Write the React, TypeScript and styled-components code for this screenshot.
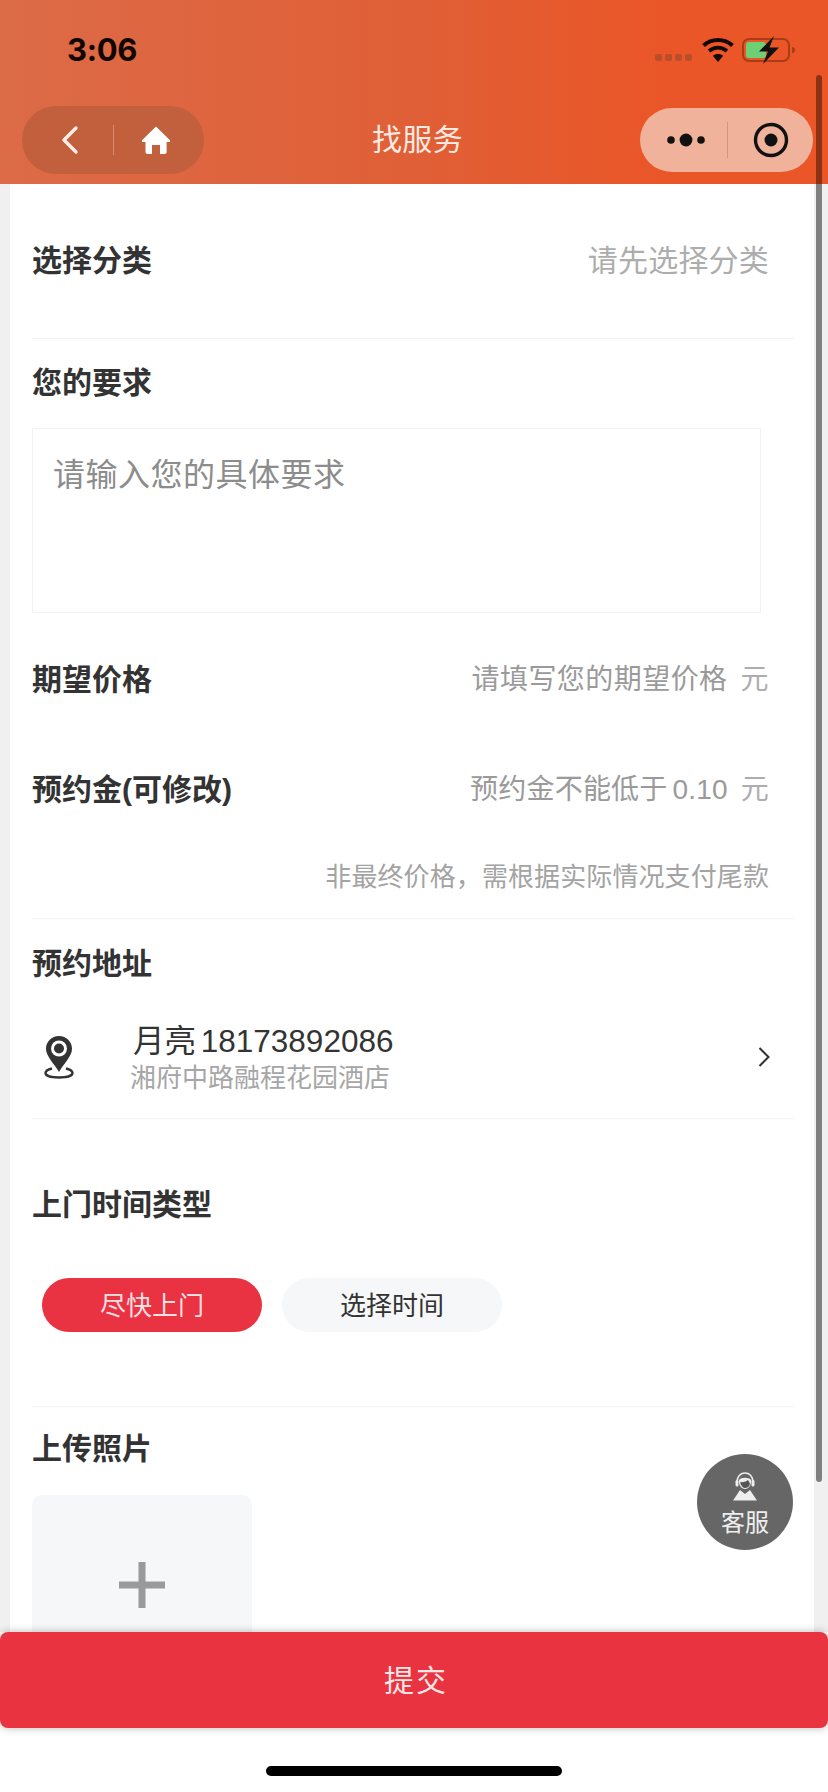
import React from "react";
import styled, { createGlobalStyle } from "styled-components";

const Global = createGlobalStyle`
  html, body { margin: 0; padding: 0; background: #fff; }
  body { font-family: "Liberation Sans", "Noto Sans CJK SC", sans-serif; }
  * { box-sizing: border-box; }
`;

const Frame = styled.div`
  position: relative;
  width: 828px;
  height: 1792px;
  display: flex;
  flex-direction: column;
  overflow: hidden;
  background: #fff;
`;
const Header = styled.header`
  height: 184px;
  flex: none;
  display: flex;
  flex-direction: column;
  background: linear-gradient(90deg, #dc6b47 0%, #e05f36 50%, #ea5628 80%, #eb5628 100%);
`;
const StatusBar = styled.div`
  height: 106px;
  display: flex;
  align-items: flex-start;
  justify-content: space-between;
  padding: 30px 32px 0 67px;
`;
const Time = styled.span`
  font-size: 31px;
  line-height: 40px;
  font-weight: 700;
  color: #120603;
  font-family: "Inter", "Liberation Sans", sans-serif;
  letter-spacing: -0.3px;
`;
const StatusIcons = styled.div`
  display: flex;
  align-items: center;
  gap: 8px;
  padding-top: 6px;
`;
const Signal = styled.div`
  display: flex;
  gap: 3px;
  margin-top: 14px;
  margin-right: 2px;
`;
const SignalDot = styled.i`
  width: 7px;
  height: 7px;
  border-radius: 2px;
  background: #bb4e2a;
`;
const NavBar = styled.div`
  height: 78px;
  display: grid;
  grid-template-columns: 1fr auto 1fr;
  align-items: flex-start;
  padding: 0 15px 0 22px;
`;
const Capsule = styled.div<{ $w: number; $h: number; $bg: string }>`
  width: ${(p) => p.$w}px;
  height: ${(p) => p.$h}px;
  border-radius: ${(p) => p.$h / 2}px;
  background: ${(p) => p.$bg};
  display: flex;
  align-items: center;
`;
const LeftCapsule = styled(Capsule)`
  justify-self: start;
`;
const RightCapsule = styled(Capsule)`
  justify-self: end;
  margin-top: 2px;
`;
const CapsuleCell = styled.div<{ $w: number; $pl?: number }>`
  width: ${(p) => p.$w}px;
  padding-left: ${(p) => p.$pl ?? 0}px;
  display: flex;
  align-items: center;
  justify-content: center;
`;
const CapsuleRule = styled.i<{ $h: number; $c: string }>`
  width: 1px;
  height: ${(p) => p.$h}px;
  background: ${(p) => p.$c};
  flex: none;
`;
const Title = styled.h1`
  margin: 0;
  font-size: 30px;
  line-height: 68px;
  font-weight: 400;
  color: #fbe9e2;
  letter-spacing: 0.4px;
`;

const Main = styled.main`
  flex: none;
  height: 1448px;
  overflow: hidden;
  background: #f0f0f0;
  padding: 0 14px 0 10px;
`;
const Sheet = styled.div`
  background: #fff;
  min-height: 100%;
  padding: 0 20px 0 22px;
`;
const Section = styled.section<{ $rule?: boolean; $pb?: number }>`
  padding-bottom: ${(p) => p.$pb ?? 0}px;
  border-bottom: ${(p) => (p.$rule ? "1px solid #f3f3f3" : "none")};
`;
const Row = styled.div<{ $h: number }>`
  height: ${(p) => p.$h}px;
  display: flex;
  align-items: center;
  justify-content: space-between;
  padding-right: 25px;
`;
const Label = styled.h2<{ $pt?: number }>`
  margin: 0;
  padding-top: ${(p) => p.$pt ?? 0}px;
  font-size: 30px;
  line-height: 44px;
  font-weight: 700;
  color: #333;
  white-space: nowrap;
`;
const Value = styled.span<{ $size?: number; $c?: string; $ls?: number }>`
  font-size: ${(p) => p.$size ?? 28}px;
  line-height: 44px;
  color: ${(p) => p.$c ?? "#9a9a9a"};
  white-space: nowrap;
  letter-spacing: ${(p) => p.$ls ?? 0.2}px;
  word-spacing: -3px;
`;
const Unit = styled.span`
  font-size: 28px;
  color: #adadad;
  margin-left: 13px;
`;
const TextBox = styled.div`
  width: 729px;
  height: 185px;
  margin-top: 23px;
  border: 1px solid #f1f1f1;
  padding: 24px 20px;
  font-size: 32px;
  line-height: 44px;
  letter-spacing: 0.5px;
  color: #8c8c8c;
`;
const Hint = styled.div`
  margin-top: 26px;
  padding-right: 25px;
  text-align: right;
  font-size: 26px;
  line-height: 36px;
  letter-spacing: 0.1px;
  color: #a3a3a3;
`;
const AddressRow = styled.div`
  height: 132px;
  display: grid;
  grid-template-columns: 98px 1fr auto;
  align-items: center;
  padding-right: 23px;
`;
const PinCell = styled.div`
  display: flex;
  padding-left: 12px;
  padding-top: 10px;
`;
const AddressText = styled.div`
  display: flex;
  flex-direction: column;
  padding-top: 14px;
`;
const Name = styled.div`
  font-size: 31.5px;
  line-height: 38px;
  color: #333;
  padding-left: 3px;
  word-spacing: -4px;
`;
const Street = styled.div`
  font-size: 26px;
  line-height: 36px;
  color: #a6a6a6;
`;
const ChevronCell = styled.div`
  display: flex;
  margin-top: 10px;
`;
const Pills = styled.div`
  display: flex;
  gap: 20px;
  padding: 51px 0 74px 10px;
`;
const Pill = styled.div<{ $on?: boolean }>`
  width: 220px;
  height: 54px;
  border-radius: 27px;
  display: flex;
  align-items: center;
  justify-content: center;
  padding-bottom: 4px;
  font-size: 26px;
  color: ${(p) => (p.$on ? "#fbdfe1" : "#333")};
  background: ${(p) => (p.$on ? "#e93343" : "#f6f7f9")};
`;
const Upload = styled.div`
  width: 220px;
  height: 220px;
  margin-top: 24px;
  border-radius: 10px;
  background: #f6f7f9;
  display: flex;
  justify-content: center;
  padding-top: 67px;
`;
const Submit = styled.button`
  flex: none;
  width: 828px;
  height: 96px;
  border: 0;
  border-radius: 8px;
  padding: 0 0 4px 4px;
  background: #e93340;
  color: #fce6e6;
  font: 400 30px "Liberation Sans", "Noto Sans CJK SC", sans-serif;
  box-shadow: 0 0 8px rgba(0, 0, 0, 0.28);
  position: relative;
  letter-spacing: 2px;
`;
const Bottom = styled.div`
  flex: 1;
  display: flex;
  justify-content: center;
  padding-top: 38px;
`;
const HomeBar = styled.i`
  width: 296px;
  height: 10px;
  border-radius: 5px;
  background: #000;
`;
const ScrollThumb = styled.i`
  position: absolute;
  left: 816px;
  top: 75px;
  width: 6px;
  height: 1407px;
  border-radius: 3px;
  background: linear-gradient(180deg, #8c3212 0, #8c3212 109px, #808080 109px);
`;
const Fab = styled.div`
  position: absolute;
  left: 697px;
  top: 1454px;
  width: 96px;
  height: 96px;
  border-radius: 50%;
  background: #666;
  color: #eee;
  display: flex;
  flex-direction: column;
  align-items: center;
  gap: 7px;
  padding-top: 15px;
  font-size: 24px;
  line-height: 30px;
`;

const Wifi = () => (
  <svg width="32" height="26" viewBox="0 0 32 26">
    <path d="M1.5 8.5C9.5 1 22.5 1 30.5 8.5" fill="none" stroke="#140805" strokeWidth="4" />
    <path d="M7 14C12.5 9.5 19.5 9.5 25 14" fill="none" stroke="#140805" strokeWidth="4" />
    <path d="M16 25L10.8 18.8C14 16.400 18 16.400 21.2 18.8Z" fill="#140805" />
  </svg>
);
const Battery = () => (
  <svg width="54" height="28" viewBox="0 0 54 28">
    <rect x="1" y="3" width="46" height="22" rx="6" fill="none" stroke="#a63d17" strokeWidth="2" />
    <rect x="4" y="6" width="20" height="16" rx="3" fill="#6fcf75" />
    <path d="M50 11v6c2 0 3-1 3-3s-1-3-3-3z" fill="#a63d17" />
    <path d="M32 0L17 15.500h9L21 28l16-16.500h-9.500z" fill="#111" />
  </svg>
);
const Back = () => (
  <svg width="20" height="30" viewBox="0 0 20 30">
    <path d="M16 3L4 15l12 12" fill="none" stroke="#fbeee8" strokeWidth="3.400" strokeLinecap="round" strokeLinejoin="round" />
  </svg>
);
const Home = () => (
  <svg width="30" height="30" viewBox="0 0 30 30">
    <path
      d="M15 1.500L29 15.200c.6.8 0 1.800-1 1.800h-2.400v10c0 1.100-.8 2-2 2H19v-9h-8v9H6.500c-1.200 0-2-.9-2-2V17H2c-1 0-1.600-1-1-1.800z"
      fill="#fff"
    />
  </svg>
);
const Dots = () => (
  <svg width="38" height="16" viewBox="0 0 38 16">
    <circle cx="4" cy="8" r="3.800" fill="#111" />
    <circle cx="19" cy="8" r="6.400" fill="#111" />
    <circle cx="34" cy="8" r="3.800" fill="#111" />
  </svg>
);
const Target = () => (
  <svg width="36" height="36" viewBox="0 0 36 36">
    <circle cx="18" cy="18" r="15.500" fill="none" stroke="#111" strokeWidth="3.400" />
    <circle cx="18" cy="18" r="6.500" fill="#111" />
  </svg>
);
const Pin = () => (
  <svg width="30" height="44" viewBox="0 0 30 44">
    <path
      d="M15 1C7.600 1 2 6.700 2 13.800 2 21.500 10.500 29 15 37c4.500-8 13-15.500 13-23.200C28 6.700 22.400 1 15 1z"
      fill="#333"
    />
    <circle cx="15" cy="13.500" r="8" fill="#fff" />
    <circle cx="15" cy="13.500" r="5" fill="#333" />
    <path
      d="M8 33.500C4 34.500 1.500 36 1.500 38c0 2.800 6 4.500 13.500 4.500s13.500-1.700 13.500-4.500c0-2-2.500-3.500-6.500-4.500"
      fill="none"
      stroke="#333"
      strokeWidth="2.400"
    />
  </svg>
);
const Chevron = () => (
  <svg width="14" height="22" viewBox="0 0 14 22">
    <path d="M2.500 2l9 9-9 9" fill="none" stroke="#333" strokeWidth="2" />
  </svg>
);
const Plus = () => (
  <svg width="46" height="46" viewBox="0 0 46 46">
    <path d="M0 23h46M23 0v46" stroke="#9a9a9a" strokeWidth="7" />
  </svg>
);
const Agent = () => (
  <svg width="26" height="32" viewBox="0 0 26 32">
    <path d="M5 13C5 1 21 1 21 13" fill="none" stroke="#eee" strokeWidth="1.600" />
    <path d="M7 11C9 8 17 8 19 11C19.500 17 16 20 13 20C10 20 6.500 17 7 11Z" fill="#eee" />
    <path d="M8 13c3 1 7-1 8-2 1 2 2 3 2 4-1 3-3 4-5 4s-4-2-5-6z" fill="#555" />
    <rect x="3.500" y="11" width="3" height="6.500" rx="1.500" fill="#eee" />
    <rect x="19.500" y="11" width="3" height="6.500" rx="1.500" fill="#eee" />
    <path d="M8 21L1 31.500h24L18 21l-5 4z" fill="#eee" />
  </svg>
);

export default function App() {
  return (
    <Frame>
      <Global />
      <Header>
        <StatusBar>
          <Time>3:06</Time>
          <StatusIcons>
            <Signal>
              <SignalDot />
              <SignalDot />
              <SignalDot />
              <SignalDot />
            </Signal>
            <Wifi />
            <Battery />
          </StatusIcons>
        </StatusBar>
        <NavBar>
          <LeftCapsule $w={182} $h={68} $bg="#c25f3c">
            <CapsuleCell $w={91} $pl={4}>
              <Back />
            </CapsuleCell>
            <CapsuleRule $h={30} $c="#d98a6e" />
            <CapsuleCell $w={74} $pl={9}>
              <Home />
            </CapsuleCell>
          </LeftCapsule>
          <Title>找服务</Title>
          <RightCapsule $w={173} $h={64} $bg="#f0b29b">
            <CapsuleCell $w={87} $pl={4}>
              <Dots />
            </CapsuleCell>
            <CapsuleRule $h={36} $c="#d9937c" />
            <CapsuleCell $w={85}>
              <Target />
            </CapsuleCell>
          </RightCapsule>
        </NavBar>
      </Header>
      <Main>
        <Sheet>
          <Section $rule>
            <Row $h={154}>
              <Label>选择分类</Label>
              <Value $size={30} $c="#adadad">请先选择分类</Value>
            </Row>
          </Section>
          <Section>
            <Label $pt={22}>您的要求</Label>
            <TextBox>请输入您的具体要求</TextBox>
            <Row $h={134}>
              <Label>期望价格</Label>
              <Value $ls={0.45}>请填写您的期望价格<Unit>元</Unit></Value>
            </Row>
          </Section>
          <Section $rule $pb={23}>
            <Row $h={86}>
              <Label>预约金(可修改)</Label>
              <Value>预约金不能低于 0.10<Unit>元</Unit></Value>
            </Row>
            <Hint>非最终价格，需根据实际情况支付尾款</Hint>
          </Section>
          <Section $rule>
            <Label $pt={23}>预约地址</Label>
            <AddressRow>
              <PinCell>
                <Pin />
              </PinCell>
              <AddressText>
                <Name>月亮 18173892086</Name>
                <Street>湘府中路融程花园酒店</Street>
              </AddressText>
              <ChevronCell>
                <Chevron />
              </ChevronCell>
            </AddressRow>
          </Section>
          <Section $rule>
            <Label $pt={64}>上门时间类型</Label>
            <Pills>
              <Pill $on>尽快上门</Pill>
              <Pill>选择时间</Pill>
            </Pills>
          </Section>
          <Section>
            <Label $pt={20}>上传照片</Label>
            <Upload>
              <Plus />
            </Upload>
          </Section>
        </Sheet>
      </Main>
      <Submit>提交</Submit>
      <Bottom>
        <HomeBar />
      </Bottom>
      <ScrollThumb />
      <Fab>
        <Agent />
        客服
      </Fab>
    </Frame>
  );
}
